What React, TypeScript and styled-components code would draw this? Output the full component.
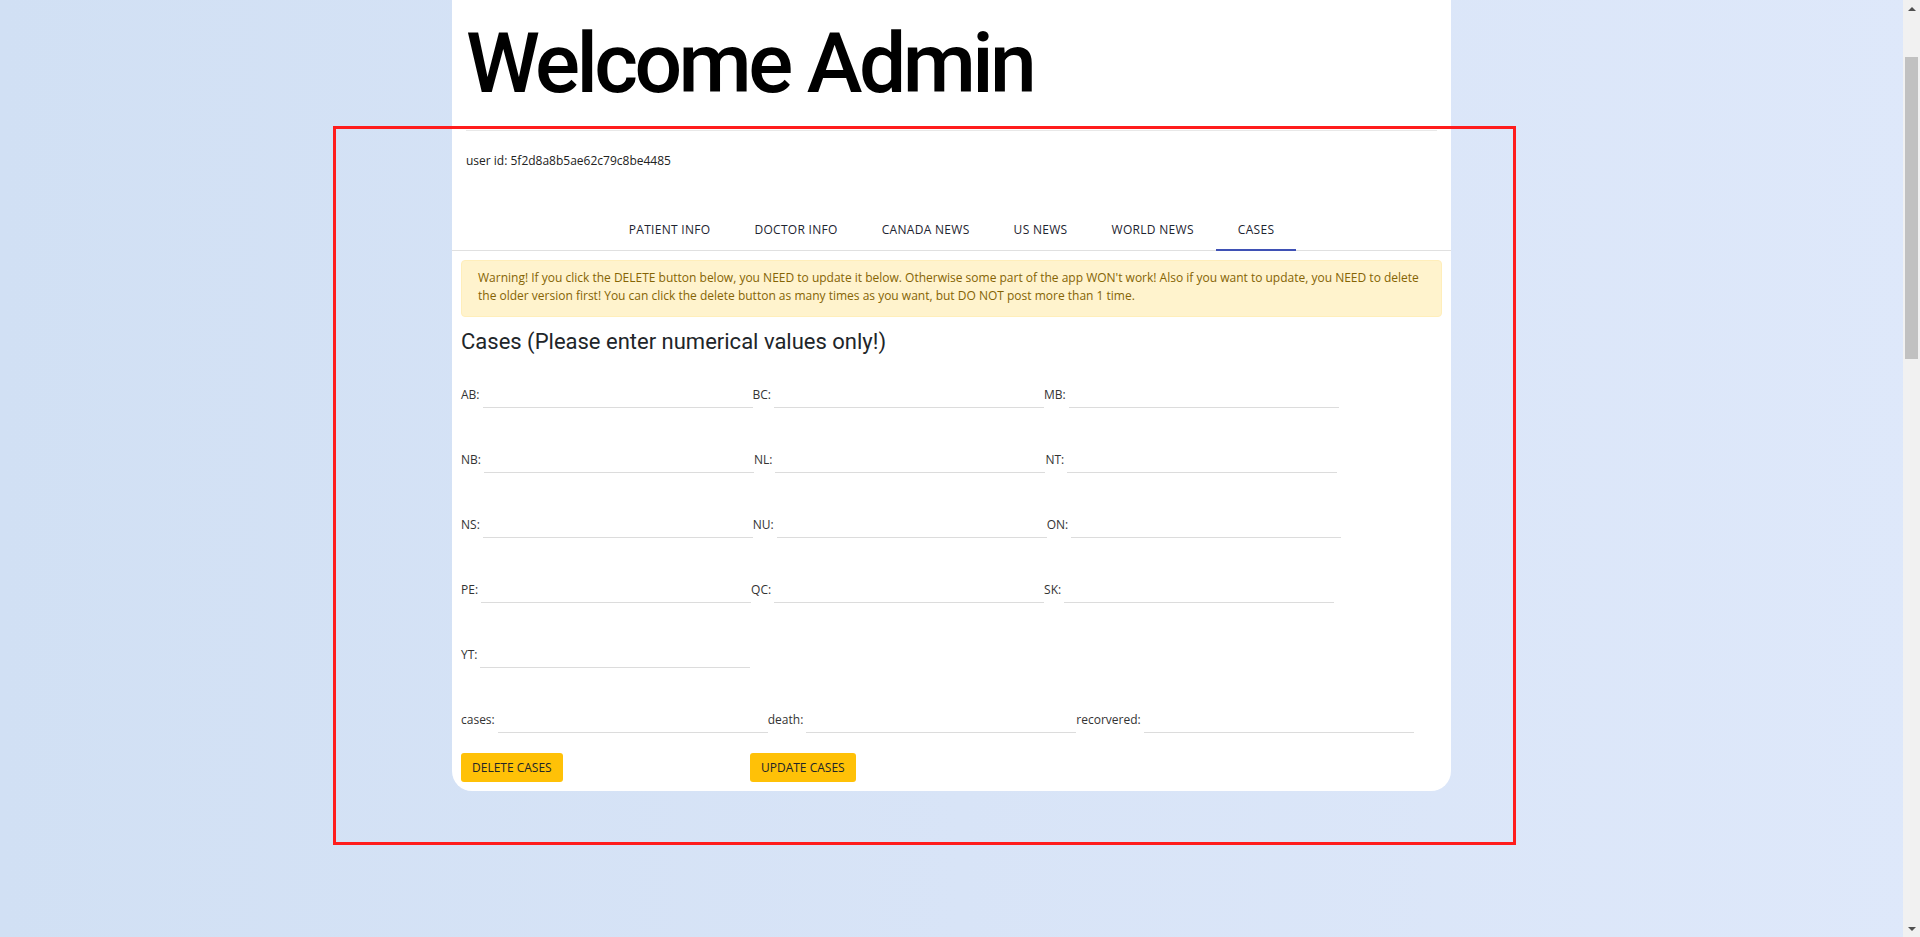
import React from "react";
import styled, { createGlobalStyle } from "styled-components";

const GlobalStyle = createGlobalStyle`
  body {
    margin: 0;
    font-family: "Open Sans", "Liberation Sans", sans-serif;
  }
  * {
    box-sizing: border-box;
  }
`;

const Page = styled.div`
  min-height: 100vh;
  padding-right: 17px;
  background: linear-gradient(to right, #d1e0f4 0%, #d8e4f7 50%, #dee8fa 100%);
`;

const Card = styled.main`
  position: relative;
  width: 999px;
  margin: 0 auto;
  background: #fff;
  border-radius: 0 0 20px 20px;
`;

const Header = styled.header`
  padding: 22px 14px 0;
`;

const Title = styled.h1`
  margin: 0;
  font-family: Roboto, "Liberation Sans", sans-serif;
  font-weight: 500;
  font-size: 84px;
  line-height: 84px;
  letter-spacing: -3.6px;
  color: #000;
`;

const UserPanel = styled.section`
  margin-top: 24px;
  border-top: 1px solid #e8e8e8;
  padding-top: 22px;
  font-size: 12px;
  line-height: 16px;
  color: #222;
`;

const TabBar = styled.nav`
  margin-top: 41px;
  display: flex;
  justify-content: center;
  border-bottom: 1px solid #e0e0e0;
`;

const Tab = styled.div<{ $active?: boolean }>`
  height: 41px;
  margin-bottom: -1px;
  padding: 0 22px;
  display: flex;
  align-items: center;
  font-size: 12px;
  line-height: 16px;
  letter-spacing: 0.3px;
  text-transform: uppercase;
  color: #1d2430;
  border-bottom: 2px solid ${(p) => (p.$active ? "#3f51b5" : "transparent")};
`;

const Body = styled.section`
  padding: 9px 9px 9px;
`;

const Alert = styled.div`
  border: 1px solid #ffeeba;
  background: #fff3cd;
  color: #856404;
  border-radius: 4px;
  padding: 8px 16px 11px;
  font-size: 12px;
  line-height: 18px;
`;

const Heading = styled.h2`
  margin: 12px 0 0;
  font-family: Roboto, "Liberation Sans", sans-serif;
  font-weight: 400;
  font-size: 22px;
  line-height: 25px;
  color: #212529;
`;

const FieldGrid = styled.div`
  margin-top: 32px;
  display: flex;
  flex-wrap: wrap;
  row-gap: 43px;
`;

const CasesRow = styled.div`
  margin-top: 43px;
  display: flex;
`;

const Field = styled.label`
  display: flex;
  align-items: flex-end;
  gap: 3px;
`;

const FieldLabel = styled.span`
  font-size: 12px;
  line-height: 16px;
  margin-bottom: 5px;
  color: #333;
`;

const Input = styled.input`
  width: 270px;
  height: 22px;
  padding: 0;
  border: none;
  border-bottom: 1px solid #dcdcdc;
  background: transparent;
  outline: none;
  font-family: inherit;
  font-size: 12px;
`;

const ButtonRow = styled.div`
  margin-top: 20px;
  display: grid;
  grid-template-columns: 289px auto;
  justify-items: start;
`;

const Button = styled.button`
  background: #ffc107;
  border: none;
  border-radius: 3px;
  padding: 6px 11px;
  font-family: inherit;
  font-size: 12px;
  line-height: 17px;
  color: #212529;
  text-transform: uppercase;
`;

const Highlight = styled.div`
  position: absolute;
  left: -119px;
  top: 126px;
  width: 1183px;
  height: 719px;
  border: 3px solid #ff1c1c;
  pointer-events: none;
`;

const Scrollbar = styled.aside`
  position: fixed;
  top: 0;
  right: 0;
  width: 17px;
  height: 100vh;
  background: #f1f1f1;
  display: flex;
  flex-direction: column;
`;

const ScrollButton = styled.div<{ $down?: boolean }>`
  height: 17px;
  display: flex;
  align-items: center;
  justify-content: center;
  &::before {
    content: "";
    width: 0;
    height: 0;
    border-left: 4px solid transparent;
    border-right: 4px solid transparent;
    ${(p) => (p.$down ? "border-top: 4px solid #505050;" : "border-bottom: 4px solid #505050;")}
  }
`;

const ScrollTrack = styled.div`
  flex: 1;
  padding: 40px 2px 0;
`;

const ScrollThumb = styled.div`
  height: 302px;
  background: #c1c1c1;
`;

const provinces = ["AB", "BC", "MB", "NB", "NL", "NT", "NS", "NU", "ON", "PE", "QC", "SK", "YT"];
const tabs = ["Patient Info", "Doctor Info", "Canada News", "US News", "World News", "Cases"];

export default function App() {
  return (
    <>
      <GlobalStyle />
      <Page>
        <Card>
          <Header>
            <Title>Welcome Admin</Title>
            <UserPanel>user id: 5f2d8a8b5ae62c79c8be4485</UserPanel>
          </Header>
          <TabBar>
            {tabs.map((t) => (
              <Tab key={t} $active={t === "Cases"}>
                {t}
              </Tab>
            ))}
          </TabBar>
          <Body>
            <Alert>
              Warning! If you click the DELETE button below, you NEED to update it below. Otherwise some part of the app
              WON't work! Also if you want to update, you NEED to delete
              <br />
              the older version first! You can click the delete button as many times as you want, but DO NOT post more
              than 1 time.
            </Alert>
            <Heading>Cases (Please enter numerical values only!)</Heading>
            <FieldGrid>
              {provinces.map((p) => (
                <Field key={p}>
                  <FieldLabel>{p}:</FieldLabel>
                  <Input type="text" />
                </Field>
              ))}
            </FieldGrid>
            <CasesRow>
              {["cases", "death", "recorvered"].map((c) => (
                <Field key={c}>
                  <FieldLabel>{c}:</FieldLabel>
                  <Input type="text" />
                </Field>
              ))}
            </CasesRow>
            <ButtonRow>
              <Button>Delete Cases</Button>
              <Button>Update Cases</Button>
            </ButtonRow>
          </Body>
          <Highlight />
        </Card>
      </Page>
      <Scrollbar>
        <ScrollButton />
        <ScrollTrack>
          <ScrollThumb />
        </ScrollTrack>
        <ScrollButton $down />
      </Scrollbar>
    </>
  );
}
